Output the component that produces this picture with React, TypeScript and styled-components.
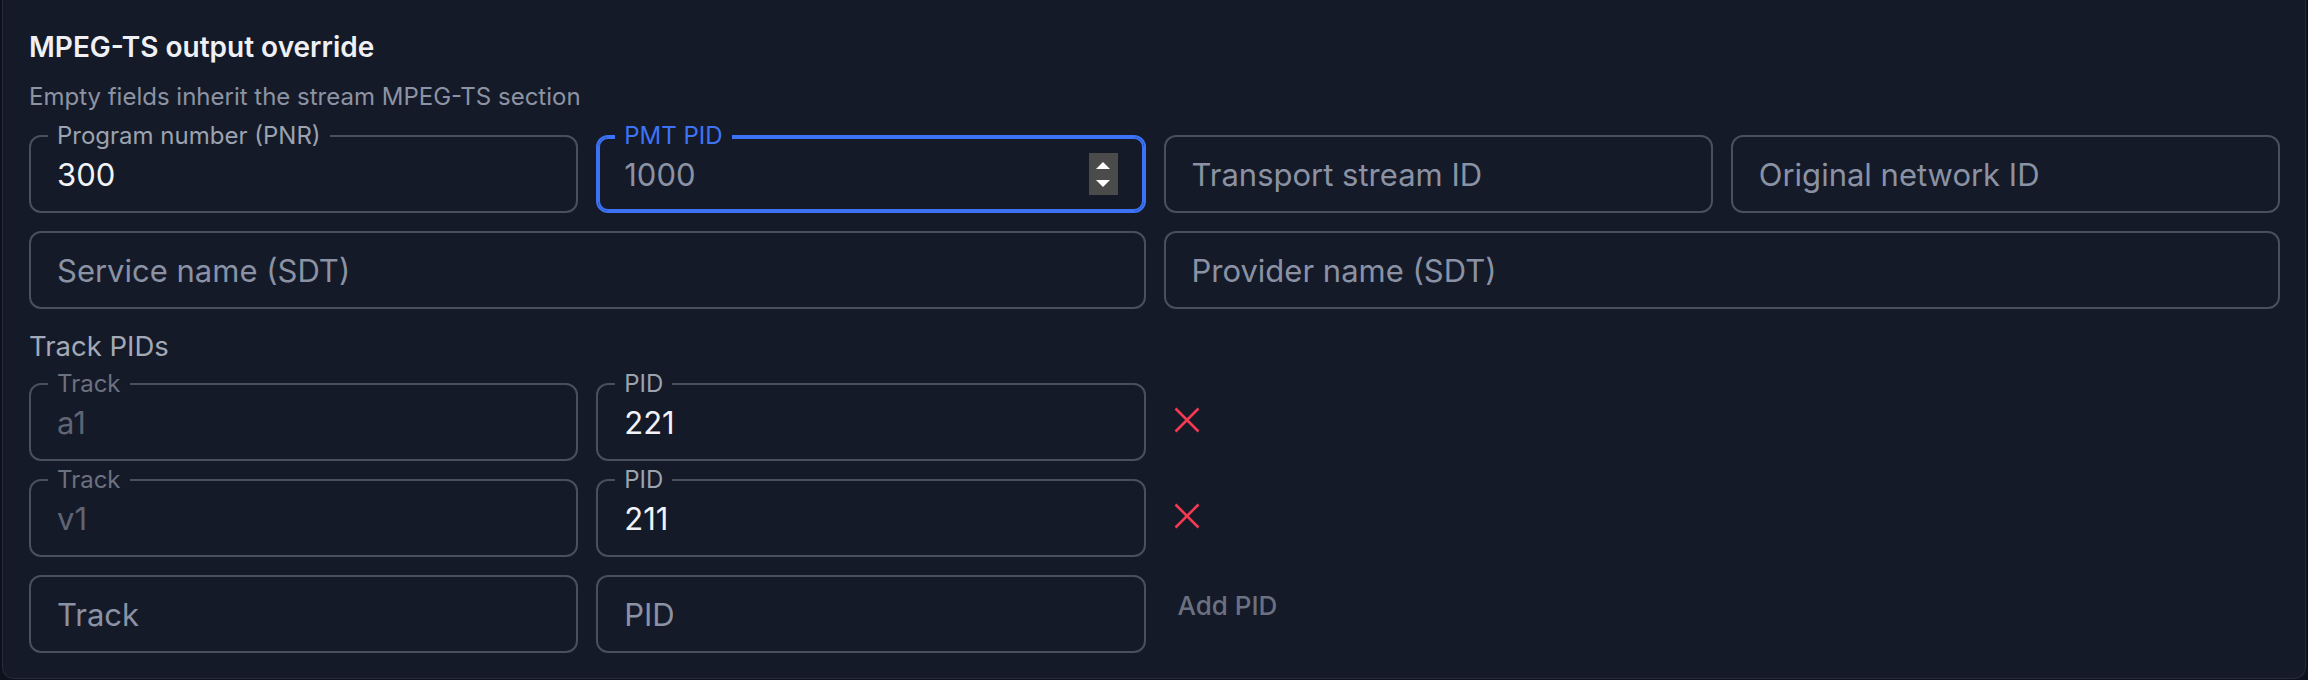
import styled, { createGlobalStyle, css } from "styled-components";

const GlobalStyle = createGlobalStyle`
	html, body {
		margin: 0;
		padding: 0;
		background: #0d111b;
	}
	body {
		font-family: Inter, "Noto Sans", "Liberation Sans", sans-serif;
		-webkit-font-smoothing: antialiased;
	}
`;

const Page = styled.div`
	width: 2308px;
	height: 680px;
	overflow: hidden;
	box-sizing: border-box;
	padding: 0 2px 1px 2px;
`;

const Panel = styled.section`
	box-sizing: border-box;
	height: 679px;
	background: #151a29;
	border: 1px solid #252b3b;
	border-top: none;
	border-radius: 0 0 12px 12px;
	padding: 31px 25px 25px 26px;
`;

const Title = styled.h3`
	margin: 0;
	font-size: 28px;
	line-height: 33px;
	font-weight: 600;
	color: #eef0f4;
`;

const Hint = styled.p`
	margin: 18px 0 0;
	font-size: 24px;
	line-height: 30px;
	color: #8c93a3;
`;

const Grid = styled.div<{ $top: number }>`
	display: grid;
	grid-template-columns: repeat(4, minmax(0, 1fr));
	grid-auto-rows: 78px;
	column-gap: 18px;
	row-gap: 18px;
	margin-top: ${(p) => p.$top}px;
`;

const SectionLabel = styled.div`
	margin-top: 21px;
	font-size: 27.5px;
	line-height: 33px;
	color: #a3a9b6;
`;

const Box = styled.div<{ $span?: number; $focused?: boolean }>`
	position: relative;
	box-sizing: border-box;
	min-width: 0;
	display: flex;
	align-items: center;
	gap: 12px;
	grid-column: span ${(p) => p.$span ?? 1};
	border: 2px solid #4a4f5d;
	border-radius: 12px;
	padding: 0 26px;
	${(p) =>
		p.$focused &&
		css`
			border-color: #3b72f6;
			box-shadow: inset 0 0 0 2px #3b72f6;
		`}
`;

const FloatLabel = styled.span<{ $tone: "idle" | "focus" | "dim" }>`
	position: absolute;
	top: -1px;
	left: 17px;
	transform: translateY(-50%);
	padding: 0 9px;
	background: #151a29;
	font-size: 24px;
	line-height: 28px;
	white-space: nowrap;
	color: ${(p) => (p.$tone === "focus" ? "#3d74f6" : p.$tone === "dim" ? "#6b7180" : "#9ca3af")};
	z-index: 1;
`;

const Input = styled.input<{ $dim?: boolean }>`
	flex: 1;
	width: 0;
	min-width: 0;
	border: none;
	outline: none;
	background: transparent;
	padding: 0;
	font-family: inherit;
	font-size: 31px;
	color: ${(p) => (p.$dim ? "#5f6574" : "#f1f3f6")};
	&::placeholder {
		color: #8a92a4;
		opacity: 1;
	}
`;

const Spinner = styled.div`
	flex: none;
	width: 29px;
	height: 42px;
	background: #4b4b4b;
	display: flex;
	flex-direction: column;
	align-items: center;
	justify-content: center;
	gap: 11px;
`;

const Actions = styled.div`
	display: flex;
	align-items: center;
	grid-column: span 2;
`;

const RemoveButton = styled.button`
	display: flex;
	align-items: center;
	justify-content: center;
	border: none;
	background: none;
	padding: 0 10px 5px;
	cursor: pointer;
`;

const AddButton = styled.button`
	border: none;
	background: none;
	padding: 0 14px 18px;
	font-family: inherit;
	font-size: 26px;
	font-weight: 500;
	color: #6b7180;
	cursor: pointer;
`;

type FieldProps = {
	label?: string;
	value?: string;
	placeholder?: string;
	span?: number;
	focused?: boolean;
	dim?: boolean;
	spin?: boolean;
};

function Field({ label, value, placeholder, span, focused, dim, spin }: FieldProps) {
	return (
		<Box $span={span} $focused={focused}>
			{label && <FloatLabel $tone={focused ? "focus" : dim ? "dim" : "idle"}>{label}</FloatLabel>}
			<Input readOnly value={value ?? ""} placeholder={placeholder} $dim={dim} />
			{spin && (
				<Spinner>
					<svg width="14" height="7" viewBox="0 0 14 7">
						<path d="M7 0 14 7H0z" fill="#fff" />
					</svg>
					<svg width="14" height="7" viewBox="0 0 14 7">
						<path d="M0 0h14L7 7z" fill="#fff" />
					</svg>
				</Spinner>
			)}
		</Box>
	);
}

function CrossIcon() {
	return (
		<svg width="26" height="26" viewBox="0 0 26 26">
			<path d="M1.5 1.5 24.5 24.5M24.5 1.5 1.5 24.5" stroke="#f43a50" strokeWidth="2.6" />
		</svg>
	);
}

const tracks = [
	{ track: "a1", pid: "221" },
	{ track: "v1", pid: "211" },
];

export default function App() {
	return (
		<Page>
			<GlobalStyle />
			<Panel>
				<Title>MPEG-TS output override</Title>
				<Hint>Empty fields inherit the stream MPEG-TS section</Hint>
				<Grid $top={23}>
					<Field label="Program number (PNR)" value="300" />
					<Field label="PMT PID" placeholder="1000" focused spin />
					<Field placeholder="Transport stream ID" />
					<Field placeholder="Original network ID" />
					<Field placeholder="Service name (SDT)" span={2} />
					<Field placeholder="Provider name (SDT)" span={2} />
				</Grid>
				<SectionLabel>Track PIDs</SectionLabel>
				<Grid $top={20}>
					{tracks.map((t) => (
						<>
							<Field key={t.track} label="Track" value={t.track} dim />
							<Field key={t.track + "-pid"} label="PID" value={t.pid} />
							<Actions key={t.track + "-act"}>
								<RemoveButton>
									<CrossIcon />
								</RemoveButton>
							</Actions>
						</>
					))}
					<Field placeholder="Track" />
					<Field placeholder="PID" />
					<Actions>
						<AddButton>Add PID</AddButton>
					</Actions>
				</Grid>
			</Panel>
		</Page>
	);
}
